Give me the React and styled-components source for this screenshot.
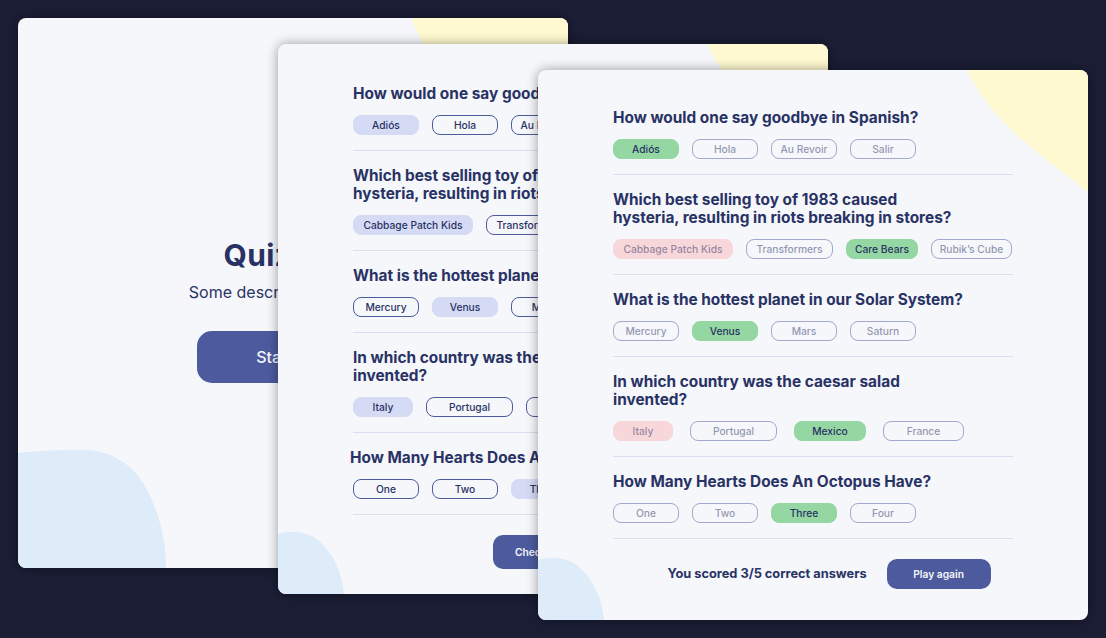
import React from 'react';
import styled, { createGlobalStyle, css } from 'styled-components';

const Global = createGlobalStyle`
  html, body { margin: 0; padding: 0; background: #1b1e35; }
  body { font-family: Inter, "Liberation Sans", sans-serif; }
  #root { width: 1106px; height: 638px; }
`;

const Stage = styled.div`
  position: relative;
  width: 1106px;
  height: 638px;
  overflow: hidden;
  background: #1b1e35;
`;

const Card = styled.section`
  position: absolute;
  left: ${p => p.$x}px;
  top: ${p => p.$y}px;
  width: 550px;
  height: 550px;
  box-sizing: border-box;
  background: #f5f7fb;
  border-radius: 8px;
  overflow: hidden;
  box-shadow: 0 0 12px rgba(0, 0, 0, 0.38);
  color: #293264;
`;

const Blob = styled.svg`
  position: absolute;
  left: 0;
  top: 0;
  width: 550px;
  height: 550px;
  pointer-events: none;
`;

const IntroBody = styled.div`
  position: relative;
  height: 100%;
  box-sizing: border-box;
  padding-top: 34px;
  display: flex;
  flex-direction: column;
  align-items: center;
  justify-content: center;
`;

const Title = styled.h1`
  margin: 0;
  font-family: Inter, "Liberation Sans", sans-serif;
  font-weight: 700;
  font-size: 30px;
  line-height: 37px;
  letter-spacing: 0.3px;
  color: #293264;
`;

const Subtitle = styled.p`
  margin: 9px 0 0;
  font-size: 16px;
  line-height: 19px;
  color: #293264;
`;

const StartButton = styled.button`
  margin-top: 29px;
  width: 192px;
  height: 52px;
  border: none;
  border-radius: 15px;
  background: #4d5b9e;
  color: #f5f7fb;
  font-family: Inter, "Liberation Sans", sans-serif;
  font-size: 16px;
  font-weight: 500;
`;

const QuizBody = styled.div`
  position: relative;
  width: 400px;
  margin: 0 auto;
  padding-top: ${p => p.$top}px;
`;

const Question = styled.div`
  padding: 15.5px 0 15px;
  border-bottom: 1px solid #dbdef0;
`;

const QuestionTitle = styled.h2`
  margin: 0 0 12.5px ${p => p.$indent || 0}px;
  font-family: Inter, "Liberation Sans", sans-serif;
  font-weight: 700;
  font-size: 15.4px;
  line-height: 18px;
  letter-spacing: 0;
  white-space: nowrap;
  color: #293264;
  span { display: block; }
`;

const Options = styled.div`
  display: flex;
  gap: ${p => p.$gap}px;
`;

const stateStyles = {
  idle: css`
    border-color: #4d5b9e;
    color: #293264;
  `,
  selected: css`
    background: #d6dbf5;
    border-color: #d6dbf5;
    color: #293264;
  `,
  correct: css`
    background: #94d7a2;
    border-color: #94d7a2;
    color: #293264;
  `,
  wrong: css`
    background: #f8d7da;
    border-color: #f8d7da;
    color: rgba(41, 50, 100, 0.5);
  `,
  dim: css`
    border-color: rgba(77, 91, 158, 0.5);
    color: rgba(41, 50, 100, 0.5);
  `,
};

const Option = styled.button`
  flex: none;
  box-sizing: border-box;
  width: ${p => p.$w}px;
  height: 20px;
  padding: 0;
  border: 0.8px solid transparent;
  border-radius: 8px;
  background: transparent;
  font-family: Inter, "Liberation Sans", sans-serif;
  font-size: 10.24px;
  font-weight: 500;
  display: flex;
  align-items: center;
  justify-content: center;
  ${p => stateStyles[p.$state]}
`;

const Footer = styled.div`
  display: flex;
  align-items: center;
  justify-content: center;
  gap: 20px;
  margin-top: ${p => p.$top}px;
  padding-left: ${p => p.$shift}px;
`;

const Score = styled.span`
  font-size: 12.8px;
  font-weight: 700;
  color: #293264;
`;

const ActionButton = styled.button`
  width: ${p => p.$w}px;
  height: ${p => p.$h}px;
  border: none;
  border-radius: 10px;
  background: #4d5b9e;
  color: #f5f7fb;
  font-family: Inter, "Liberation Sans", sans-serif;
  font-size: 10.24px;
  font-weight: 600;
`;

const questions = [
  {
    lines: ['How would one say goodbye in Spanish?'],
    options: [{ t: 'Adiós' }, { t: 'Hola' }, { t: 'Au Revoir' }, { t: 'Salir' }],
    answer: 0,
    picked: 0,
  },
  {
    lines: ['Which best selling toy of 1983 caused', 'hysteria, resulting in riots breaking in stores?'],
    options: [
      { t: 'Cabbage Patch Kids', w: 120 },
      { t: 'Transformers', w: 87 },
      { t: 'Care Bears', w: 72 },
      { t: 'Rubik’s Cube', w: 81 },
    ],
    answer: 2,
    picked: 0,
  },
  {
    lines: ['What is the hottest planet in our Solar System?'],
    options: [{ t: 'Mercury' }, { t: 'Venus' }, { t: 'Mars' }, { t: 'Saturn' }],
    answer: 1,
    picked: 1,
  },
  {
    lines: ['In which country was the caesar salad', 'invented?'],
    options: [
      { t: 'Italy', w: 60 },
      { t: 'Portugal', w: 87 },
      { t: 'Mexico', w: 72 },
      { t: 'France', w: 81 },
    ],
    answer: 2,
    picked: 0,
    resultGap: 17,
  },
  {
    lines: ['How Many Hearts Does An Octopus Have?'],
    options: [{ t: 'One' }, { t: 'Two' }, { t: 'Three' }, { t: 'Four' }],
    answer: 2,
    picked: 2,
    indent: -3,
  },
];

function optionState(q, i, checked) {
  if (!checked) return i === q.picked ? 'selected' : 'idle';
  if (i === q.answer) return 'correct';
  if (i === q.picked) return 'wrong';
  return 'dim';
}

const YELLOW = '#fffad1';
const BLUE = '#deebf8';

function SmallBlobs() {
  return (
    <Blob viewBox="0 0 550 550">
      <path d="M429 0 C 440 24, 458 46, 480 66 C 505 88, 530 106, 550 122 L 550 0 Z" fill={YELLOW} />
      <path d="M0 490 C 12 486, 28 487, 40 496 C 55 509, 64 528, 66 550 L 0 550 Z" fill={BLUE} />
    </Blob>
  );
}

function BigBlobs() {
  return (
    <Blob viewBox="0 0 550 550">
      <path d="M394 0 C 404 32, 432 72, 470 110 C 498 136, 525 154, 550 166 L 550 0 Z" fill={YELLOW} />
      <path d="M0 435 C 22 433, 46 431, 70 432 C 96 434, 116 448, 128 470 C 142 496, 148 524, 148 550 L 0 550 Z" fill={BLUE} />
    </Blob>
  );
}

function QuizCard({ x, y, checked, top, footerTop }) {
  return (
    <Card $x={x} $y={y}>
      <SmallBlobs />
      <QuizBody $top={top}>
        {questions.map((q, qi) => (
          <Question key={qi}>
            <QuestionTitle $indent={checked ? 0 : q.indent}>
              {q.lines.map(l => (
                <span key={l}>{l}</span>
              ))}
            </QuestionTitle>
            <Options $gap={checked && q.resultGap ? q.resultGap : 13}>
              {q.options.map((o, i) => (
                <Option key={o.t} $w={o.w || 66} $state={optionState(q, i, checked)}>
                  {o.t}
                </Option>
              ))}
            </Options>
          </Question>
        ))}
        {checked ? (
          <Footer $top={footerTop} $shift={32}>
            <Score>You scored 3/5 correct answers</Score>
            <ActionButton $w={104} $h={30}>Play again</ActionButton>
          </Footer>
        ) : (
          <Footer $top={footerTop} $shift={0}>
            <ActionButton $w={120} $h={34}>Check answers</ActionButton>
          </Footer>
        )}
      </QuizBody>
    </Card>
  );
}

export default function App() {
  return (
    <>
      <Global />
      <Stage>
        <Card $x={18} $y={18}>
          <BigBlobs />
          <IntroBody>
            <Title>Quizzical</Title>
            <Subtitle>Some description if needed</Subtitle>
            <StartButton>Start quiz</StartButton>
          </IntroBody>
        </Card>
        <QuizCard x={278} y={44} top={25} footerTop={20} checked={false} />
        <QuizCard x={538} y={70} top={23} footerTop={19.5} checked />
      </Stage>
    </>
  );
}
